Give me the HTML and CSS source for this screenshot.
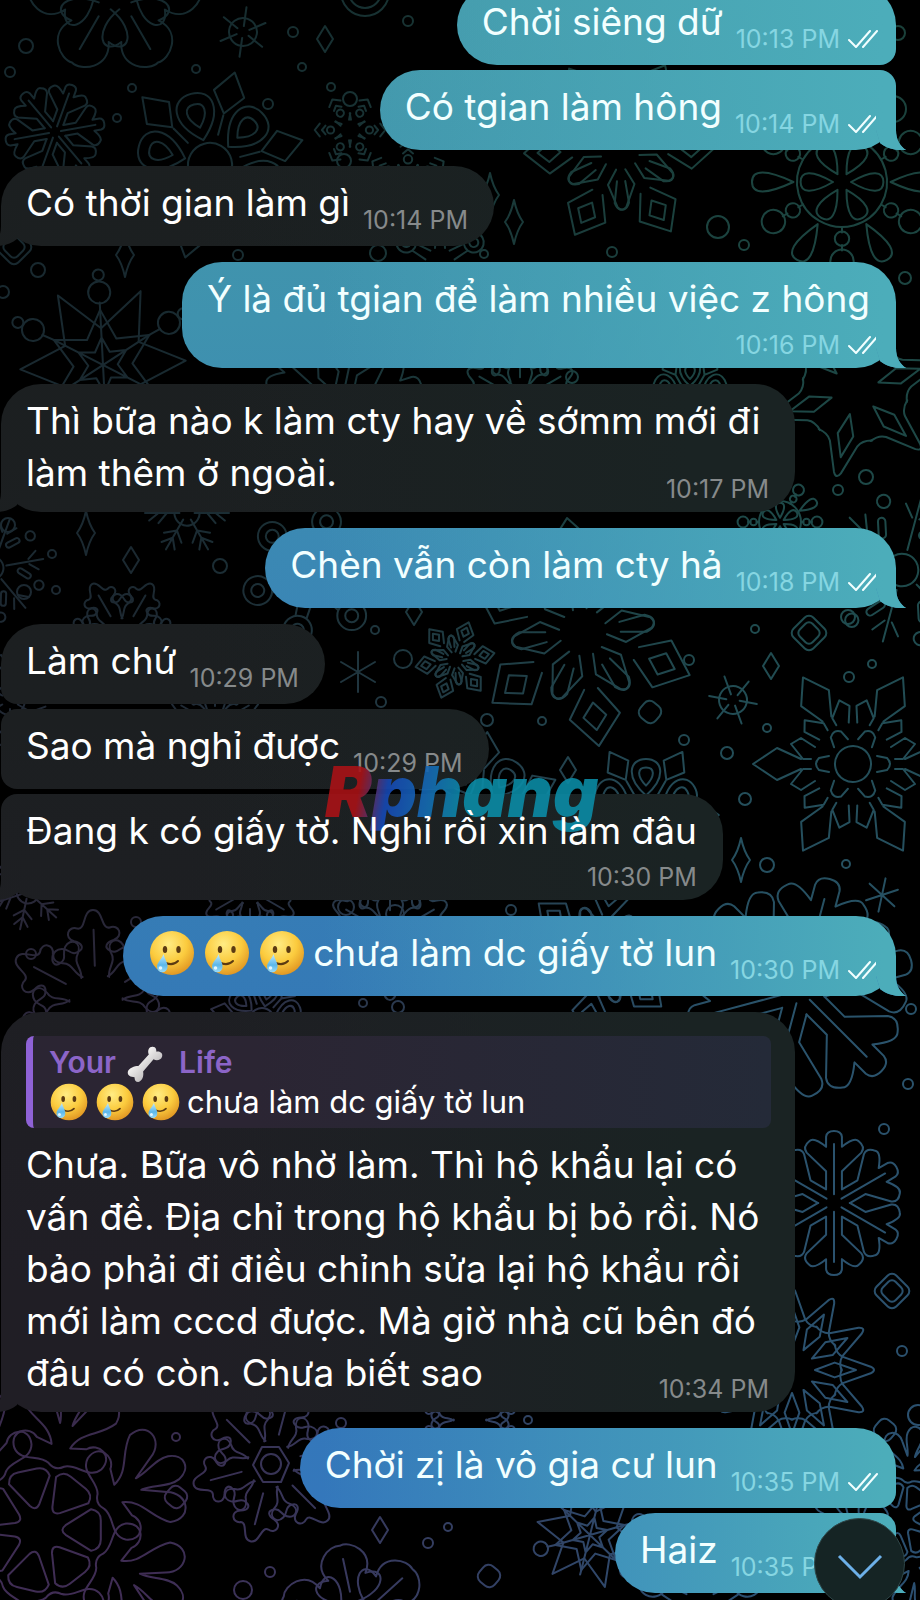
FILE: index.html
```html
<!DOCTYPE html>
<html lang="vi">
<head>
<meta charset="utf-8">
<meta name="viewport" content="width=device-width, initial-scale=1">
<title>Chat</title>
<link rel="stylesheet" href="styles.css">
</head>
<body>

<svg class="wallpaper" viewBox="0 0 920 1600" preserveAspectRatio="xMidYMin slice" aria-hidden="true">
  <defs>
    <linearGradient id="tint-left" x1="0" y1="0" x2="0" y2="1">
      <stop offset="0" stop-color="#16292e"/>
      <stop offset=".35" stop-color="#1b2931"/>
      <stop offset=".6" stop-color="#2a2739"/>
      <stop offset="1" stop-color="#402d55"/>
    </linearGradient>
    <linearGradient id="tint-right" x1="0" y1="0" x2="0" y2="1">
      <stop offset="0" stop-color="#1a4039"/>
      <stop offset=".35" stop-color="#1e4a4a"/>
      <stop offset=".65" stop-color="#2a536c"/>
      <stop offset="1" stop-color="#2b4f70"/>
    </linearGradient>
    <linearGradient id="fade" x1="0" y1="0" x2="1" y2="0">
      <stop offset=".15" stop-color="#000"/>
      <stop offset=".8" stop-color="#fff"/>
    </linearGradient>
    <mask id="fade-mask"><rect width="920" height="1600" fill="url(#fade)"/></mask>

    <!-- arms point up, 100 units long -->
    <g id="arm-leaf">
      <path d="M-8 -24C-48 -30 -54 -62 -25 -58C-42 -84 -14 -104 0 -100C14 -104 42 -84 25 -58C54 -62 48 -30 8 -24M0 -38V-82"/>
    </g>
    <g id="arm-lobe">
      <path d="M-14 -26C-24 -30 -24 -42 -36 -42C-50 -44 -48 -58 -36 -58C-28 -58 -26 -50 -18 -54C-10 -58 -14 -64 -22 -66C-34 -70 -28 -84 -18 -80C-8 -78 -12 -100 0 -100C12 -100 8 -78 18 -80C28 -84 34 -70 22 -66C14 -64 10 -58 18 -54C26 -50 28 -58 36 -58C48 -58 50 -44 36 -42C24 -42 24 -30 14 -26M0 -38V-78"/>
    </g>
    <g id="arm-branch">
      <path d="M-11 -19V-44L-38 -70Q-44 -78 -34 -86Q-28 -92 -11 -78V-92Q-10 -100 0 -100Q10 -100 11 -92V-78Q28 -92 34 -86Q44 -78 38 -70L11 -44V-19M0 -12V-82"/>
    </g>
    <g id="arm-diamond">
      <path d="M-6 -20V-38L-26 -54Q-36 -56 -34 -44L-20 -26M6 -20V-38L26 -54Q36 -56 34 -44L20 -26M-6 -50L-22 -74L0 -100L22 -74L6 -50M0 -86L10 -74L0 -62L-10 -74Z"/>
    </g>
    <g id="arm-spear">
      <path d="M-5 -42V-50L-20 -62L-26 -52L-17 -38M5 -42V-50L20 -62L26 -52L17 -38M-5 -52L-16 -76L0 -100L16 -76L5 -52M-8 -24L-6 -34Q0 -40 6 -34L8 -24"/>
    </g>
    <g id="arm-petal">
      <path d="M0 -10C-14 -34 -12 -46 0 -46C12 -46 14 -34 0 -10ZM0 -54C-14 -84 -14 -100 0 -100C14 -100 14 -84 0 -54Z"/>
    </g>
    <g id="arm-bead">
      <path d="M0 -50V-56M0 -70V-76"/>
      <circle cy="-63" r="8"/><circle cy="-88" r="13"/>
    </g>
    <g id="arm-splash">
      <path d="M-3 -16Q0 -12 3 -16L13 -32Q12 -38 6 -38H-6Q-12 -38 -13 -32Z" transform="rotate(25)"/>
      <path d="M-5 -42C-12 -46 -22 -38 -28 -46C-34 -56 -22 -62 -16 -56L-6 -54C-10 -66 -22 -66 -30 -76C-34 -90 -18 -94 -12 -82L-4 -68C-4 -76 -10 -84 -8 -92C-5 -102 5 -102 8 -92C10 -84 4 -76 4 -68L12 -82C18 -94 34 -90 30 -76C22 -66 10 -66 6 -54L16 -56C22 -62 34 -56 28 -46C22 -38 12 -46 5 -42Q0 -38 -5 -42"/>
    </g>
    <g id="arm-burst">
      <path d="M0 -28V-100M-5 -72L-18 -88M5 -72L18 -88"/>
      <rect x="-29" y="-72" width="10" height="28" rx="5" transform="rotate(-18)"/>
      <circle cx="0" cy="-96" r="9" transform="rotate(30)"/>
    </g>
    <g id="arm-twig">
      <path d="M0 -18V-100M0 -48L-24 -68M0 -48L24 -68M0 -68L-18 -90M0 -68L18 -90"/>
    </g>
    <g id="arm-loop">
      <path d="M0 -28C-30 -54 -24 -80 0 -80C24 -80 30 -54 0 -28ZM0 -42C-14 -56 -12 -68 0 -68C12 -68 14 -56 0 -42Z"/>
      <path d="M0 -58L-17 -80L0 -104L17 -80Z" transform="rotate(30)"/>
      <path d="M0 -34V-56" transform="rotate(30)"/>
    </g>
    <g id="arm-dash">
      <path d="M-18 -84L0 -98L18 -84M-12 -68L0 -78L12 -68M-24 -40L-12 -26M24 -40L12 -26"/>
      <circle cy="-54" r="10"/>
    </g>
    <g id="arm-ring">
      <path d="M-10 -28L-8 -58M10 -28L8 -58"/>
      <circle cy="-78" r="20"/><circle cy="-78" r="9"/>
    </g>

    <g id="leaf"><use href="#arm-leaf"/><use href="#arm-leaf" transform="rotate(60)"/><use href="#arm-leaf" transform="rotate(120)"/><use href="#arm-leaf" transform="rotate(180)"/><use href="#arm-leaf" transform="rotate(240)"/><use href="#arm-leaf" transform="rotate(300)"/></g>
    <g id="lobe"><use href="#arm-lobe"/><use href="#arm-lobe" transform="rotate(60)"/><use href="#arm-lobe" transform="rotate(120)"/><use href="#arm-lobe" transform="rotate(180)"/><use href="#arm-lobe" transform="rotate(240)"/><use href="#arm-lobe" transform="rotate(300)"/></g>
    <g id="branch"><use href="#arm-branch"/><use href="#arm-branch" transform="rotate(60)"/><use href="#arm-branch" transform="rotate(120)"/><use href="#arm-branch" transform="rotate(180)"/><use href="#arm-branch" transform="rotate(240)"/><use href="#arm-branch" transform="rotate(300)"/></g>
    <g id="diamond"><use href="#arm-diamond"/><use href="#arm-diamond" transform="rotate(60)"/><use href="#arm-diamond" transform="rotate(120)"/><use href="#arm-diamond" transform="rotate(180)"/><use href="#arm-diamond" transform="rotate(240)"/><use href="#arm-diamond" transform="rotate(300)"/></g>
    <g id="spear"><circle r="18"/><use href="#arm-spear"/><use href="#arm-spear" transform="rotate(60)"/><use href="#arm-spear" transform="rotate(120)"/><use href="#arm-spear" transform="rotate(180)"/><use href="#arm-spear" transform="rotate(240)"/><use href="#arm-spear" transform="rotate(300)"/></g>
    <g id="petal"><circle r="50"/><use href="#arm-petal"/><use href="#arm-petal" transform="rotate(60)"/><use href="#arm-petal" transform="rotate(120)"/><use href="#arm-petal" transform="rotate(180)"/><use href="#arm-petal" transform="rotate(240)"/><use href="#arm-petal" transform="rotate(300)"/><g transform="rotate(30)"><use href="#arm-bead"/><use href="#arm-bead" transform="rotate(60)"/><use href="#arm-bead" transform="rotate(120)"/><use href="#arm-bead" transform="rotate(180)"/><use href="#arm-bead" transform="rotate(240)"/><use href="#arm-bead" transform="rotate(300)"/></g></g>
    <g id="splash"><use href="#arm-splash"/><use href="#arm-splash" transform="rotate(51)"/><use href="#arm-splash" transform="rotate(103)"/><use href="#arm-splash" transform="rotate(154)"/><use href="#arm-splash" transform="rotate(206)"/><use href="#arm-splash" transform="rotate(257)"/><use href="#arm-splash" transform="rotate(309)"/></g>
    <g id="burst"><circle r="22"/><use href="#arm-burst"/><use href="#arm-burst" transform="rotate(60)"/><use href="#arm-burst" transform="rotate(120)"/><use href="#arm-burst" transform="rotate(180)"/><use href="#arm-burst" transform="rotate(240)"/><use href="#arm-burst" transform="rotate(300)"/></g>
    <g id="twig"><circle r="30"/><use href="#arm-twig"/><use href="#arm-twig" transform="rotate(60)"/><use href="#arm-twig" transform="rotate(120)"/><use href="#arm-twig" transform="rotate(180)"/><use href="#arm-twig" transform="rotate(240)"/><use href="#arm-twig" transform="rotate(300)"/></g>
    <g id="loop"><circle r="24"/><use href="#arm-loop"/><use href="#arm-loop" transform="rotate(60)"/><use href="#arm-loop" transform="rotate(120)"/><use href="#arm-loop" transform="rotate(180)"/><use href="#arm-loop" transform="rotate(240)"/><use href="#arm-loop" transform="rotate(300)"/></g>
    <g id="dash"><use href="#arm-dash"/><use href="#arm-dash" transform="rotate(60)"/><use href="#arm-dash" transform="rotate(120)"/><use href="#arm-dash" transform="rotate(180)"/><use href="#arm-dash" transform="rotate(240)"/><use href="#arm-dash" transform="rotate(300)"/></g>
    <g id="ring"><use href="#arm-ring"/><use href="#arm-ring" transform="rotate(60)"/><use href="#arm-ring" transform="rotate(120)"/><use href="#arm-ring" transform="rotate(180)"/><use href="#arm-ring" transform="rotate(240)"/><use href="#arm-ring" transform="rotate(300)"/></g>
    <g id="star">
      <path d="M0 -60L16 -28L52 -30L32 0L52 30L16 28L0 60L-16 28L-52 30L-32 0L-52 -30L-16 -28Z"/>
      <path d="M0 -30L8 -14L26 -15L16 0L26 15L8 14L0 30L-8 14L-26 15L-16 0L-26 -15L-8 -14ZM0 -60V60M-52 -30L52 30M-52 30L52 -30"/>
      <path d="M0 -40L45 -78L40 -23L90 0L40 23L45 78L0 40L-45 78L-40 23L-90 0L-40 -23L-45 -78Z"/>
      <path d="M0 -60V-68M52 -30L64 -36M52 30L64 36M0 60V68M-52 30L-64 36M-52 -30L-64 -36"/>
      <circle cy="-79" r="12"/><circle cx="74" cy="-42" r="12"/><circle cx="74" cy="42" r="12"/><circle cx="-74" cy="42" r="12"/><circle cx="-74" cy="-42" r="12"/>
      <circle cy="-98" r="6"/><circle cx="90" cy="-51" r="6"/><circle cx="-90" cy="-51" r="6"/>
    </g>
    <g id="arm-ray"><path d="M-31 -52Q-20 -54 -16 -62L-4 -96Q0 -104 4 -96L16 -62Q20 -54 31 -52M0 -28L-9 -52L0 -78L9 -52Z"/></g>
    <g id="rays"><use href="#arm-ray"/><use href="#arm-ray" transform="rotate(60)"/><use href="#arm-ray" transform="rotate(120)"/><use href="#arm-ray" transform="rotate(180)"/><use href="#arm-ray" transform="rotate(240)"/><use href="#arm-ray" transform="rotate(300)"/></g>
    <g id="wheel"><circle r="14"/><path d="M0 -6V-25M0 6V25M6 -3L21 -12M-6 3L-21 12M6 3L21 12M-6 -3L-21 -12"/></g>
    <path id="spark" d="M0 -20V20M-17 -10L17 10M-17 10L17 -10"/>
    <path id="gem" d="M0 -13L8 0L0 13L-8 0Z"/>
    <path id="tall-gem" d="M0 -22Q3 -8 9 0Q3 8 0 22Q-3 8 -9 0Q-3 -8 0 -22Z"/>
    <g id="tile"><rect x="-14" y="-14" width="28" height="28" rx="6" transform="rotate(45)"/><rect x="-9" y="-9" width="18" height="18" rx="5" transform="rotate(45)"/></g>
    <rect id="pebble" x="-10" y="-10" width="20" height="20" rx="7" transform="rotate(40)"/>

    <mask id="flakes" maskUnits="userSpaceOnUse" x="0" y="0" width="920" height="1600">
      <g class="flake-lines">
        <use href="#leaf" transform="translate(115 -12) rotate(30) scale(.86)"/>
        <use href="#wheel" transform="translate(243 32) rotate(8)"/>
        <use href="#branch" transform="translate(55 132) rotate(20) scale(.5)"/>
        <use href="#loop" transform="translate(210 165) rotate(-15) scale(.92)"/>
        <use href="#dash" transform="translate(350 130) rotate(30) scale(.36)"/>
        <use href="#dash" transform="translate(408 182) scale(.42)"/>
        <use href="#star" transform="translate(103 365) rotate(-3) scale(.92)"/>
        <use href="#diamond" transform="translate(620 150) rotate(28) scale(.96)"/>
        <use href="#petal" transform="translate(842 182) rotate(30) scale(.9)"/>
        <use href="#ring" transform="translate(440 262) scale(.5)"/>
        <use href="#branch" transform="translate(340 410) rotate(12) scale(.85)"/>
        <use href="#lobe" transform="translate(520 400) scale(.6)"/>
        <use href="#loop" transform="translate(690 400) scale(.5)"/>
        <use href="#rays" transform="translate(855 390) rotate(12) scale(.88)"/>
        <use href="#petal" transform="translate(780 522) scale(.42)"/>
        <use href="#burst" transform="translate(902 570) rotate(15) scale(.74)"/>
        <use href="#twig" transform="translate(187 513) rotate(30) scale(.42)"/>
        <use href="#burst" transform="translate(-8 568) rotate(20) scale(.52)"/>
        <use href="#lobe" transform="translate(122 636) rotate(30) scale(.6)"/>
        <use href="#ring" transform="translate(312 576) rotate(15) scale(.72)"/>
        <use href="#diamond" transform="translate(583 632) rotate(-8) scale(1.15)"/>
        <use href="#diamond" transform="translate(455 660) rotate(20) scale(.4)"/>
        <use href="#spark" transform="translate(358 672)"/>
        <use href="#wheel" transform="translate(733 700) rotate(-20)"/>
        <use href="#spear" transform="translate(853 764) rotate(30)"/>
        <use href="#lobe" transform="translate(215 725) scale(.5)"/>
        <use href="#twig" transform="translate(10 700) scale(.5)"/>
        <use href="#loop" transform="translate(646 815) scale(.7)"/>
        <use href="#loop" transform="translate(480 815) rotate(35) scale(.8)"/>
        <use href="#spark" transform="translate(882 895) rotate(12) scale(.85)"/>
        <use href="#branch" transform="translate(800 990) rotate(15) scale(1.15)"/>
        <use href="#lobe" transform="translate(96 1000) rotate(-2) scale(.9)"/>
        <use href="#lobe" transform="translate(250 890) scale(.5)"/>
        <use href="#twig" transform="translate(28 892) rotate(12) scale(.38)"/>
        <use href="#loop" transform="translate(262 1020) rotate(12) scale(.5)"/>
        <use href="#diamond" transform="translate(600 955) rotate(10) scale(.8)"/>
        <use href="#lobe" transform="translate(390 935) scale(.65)"/>
        <use href="#branch" transform="translate(834 1203) scale(.72)"/>
        <use href="#rays" transform="translate(792 1370) rotate(30) scale(.82)"/>
        <use href="#rays" transform="translate(792 1370) scale(.82)"/>
        <use href="#splash" transform="translate(40 1530) rotate(14) scale(1.6)"/>
        <use href="#lobe" transform="translate(271 1464) rotate(15) scale(.8)"/>
        <path d="M262 1447L279 1447L289 1463L281 1482L263 1482L253 1465Z"/>
        <circle cx="271" cy="1464" r="10"/>
        <use href="#leaf" transform="translate(356 1620) rotate(-12) scale(.76)"/>
        <use href="#lobe" transform="translate(470 1420) scale(.55)"/>
        <use href="#star" transform="translate(590 1535) rotate(14) scale(.6)"/>
        <use href="#splash" transform="translate(900 1520) rotate(10) scale(.95)"/>
        <use href="#ring" transform="translate(700 1610) scale(.7)"/>

        <use href="#tile" transform="translate(809 633)"/>
        <use href="#tile" transform="translate(892 1291)"/>
        <use href="#tile" transform="translate(14 247)"/>
        <use href="#pebble" transform="translate(650 712)"/>
        <use href="#pebble" transform="translate(176 1497)"/>
        <use href="#pebble" transform="translate(489 1576)"/>
        <use href="#pebble" transform="translate(885 1430)"/>
        <use href="#gem" transform="translate(325 39)"/>
        <use href="#gem" transform="translate(131 560)"/>
        <use href="#gem" transform="translate(771 666)"/>
        <use href="#gem" transform="translate(568 770)"/>
        <use href="#gem" transform="translate(414 612)"/>
        <use href="#gem" transform="translate(380 1530)"/>
        <use href="#tall-gem" transform="translate(514 222)"/>
        <use href="#tall-gem" transform="translate(490 195)"/>
        <use href="#tall-gem" transform="translate(125 255)"/>
        <use href="#tall-gem" transform="translate(86 533)"/>
        <use href="#tall-gem" transform="translate(741 860)"/>

        <circle cx="26" cy="46" r="7"/><circle cx="10" cy="72" r="5"/><circle cx="365" cy="-8" r="24"/><circle cx="365" cy="-8" r="16"/>
        <circle cx="293" cy="32" r="5"/><circle cx="302" cy="67" r="4"/><circle cx="408" cy="21" r="5"/><circle cx="196" cy="69" r="4"/>
        <circle cx="132" cy="88" r="4"/><circle cx="117" cy="118" r="4"/><circle cx="268" cy="104" r="5"/><circle cx="331" cy="87" r="4"/>
        <circle cx="350" cy="99" r="7"/><circle cx="344" cy="161" r="7"/><circle cx="898" cy="33" r="7"/><circle cx="893" cy="109" r="13"/>
        <circle cx="38" cy="270" r="7"/><circle cx="3" cy="292" r="6"/><circle cx="238" cy="255" r="5"/><circle cx="378" cy="253" r="8"/>
        <circle cx="484" cy="254" r="4"/><circle cx="612" cy="252" r="5"/><circle cx="718" cy="227" r="11"/><circle cx="744" cy="245" r="5"/>
        <circle cx="905" cy="278" r="6"/><circle cx="572" cy="377" r="6"/><circle cx="866" cy="477" r="7"/><circle cx="838" cy="490" r="5"/>
        <circle cx="8" cy="525" r="7"/><circle cx="52" cy="554" r="4"/><circle cx="24" cy="592" r="7"/><circle cx="56" cy="590" r="4"/>
        <circle cx="220" cy="566" r="7"/><circle cx="375" cy="630" r="4"/><circle cx="403" cy="659" r="9"/><circle cx="381" cy="702" r="5"/>
        <circle cx="487" cy="720" r="6"/><circle cx="542" cy="721" r="4"/><circle cx="689" cy="660" r="5"/><circle cx="755" cy="629" r="4"/>
        <circle cx="767" cy="728" r="4"/><circle cx="684" cy="740" r="5"/><circle cx="727" cy="753" r="6"/><circle cx="848" cy="617" r="7"/>
        <circle cx="849" cy="677" r="5"/><circle cx="872" cy="664" r="4"/><circle cx="745" cy="799" r="6"/><circle cx="767" cy="865" r="7"/>
        <circle cx="846" cy="864" r="4"/><circle cx="511" cy="910" r="5"/><circle cx="346" cy="907" r="8"/><circle cx="395" cy="914" r="9"/>
        <circle cx="136" cy="922" r="5"/><circle cx="31" cy="954" r="5"/><circle cx="363" cy="1003" r="4"/><circle cx="398" cy="1007" r="6"/>
        <circle cx="911" cy="1009" r="5"/><circle cx="908" cy="1084" r="5"/><circle cx="884" cy="1129" r="5"/><circle cx="902" cy="1351" r="5"/>
        <circle cx="176" cy="1437" r="4"/><circle cx="341" cy="1423" r="5"/><circle cx="528" cy="1420" r="4"/><circle cx="428" cy="1543" r="5"/>
        <circle cx="448" cy="1527" r="4"/><circle cx="270" cy="1572" r="5"/><circle cx="243" cy="1590" r="9"/><circle cx="918" cy="1415" r="10"/>
      </g>
    </mask>
  </defs>
  <g mask="url(#flakes)">
    <rect width="920" height="1600" fill="url(#tint-left)"/>
    <rect width="920" height="1600" fill="url(#tint-right)" mask="url(#fade-mask)"/>
  </g>
</svg>

<!-- shared icons -->
<svg class="sprite" aria-hidden="true">
  <defs>
    <radialGradient id="face-fill" cx=".42" cy=".3" r=".75">
      <stop offset="0" stop-color="#ffec84"/>
      <stop offset=".55" stop-color="#fbcb3e"/>
      <stop offset="1" stop-color="#dd9020"/>
    </radialGradient>
    <linearGradient id="tear-fill" x1="0" y1="0" x2="0" y2="1">
      <stop offset="0" stop-color="#c3ecff"/>
      <stop offset=".6" stop-color="#5cb7ea"/>
      <stop offset="1" stop-color="#9adcf8"/>
    </linearGradient>
    <linearGradient id="bone-fill" x1="0" y1="0" x2="1" y2="1">
      <stop offset=".3" stop-color="#f7f6f5"/>
      <stop offset=".75" stop-color="#b9b6b8"/>
    </linearGradient>
  </defs>
  <symbol id="tear-face" viewBox="0 0 48 48">
    <circle cx="24" cy="24" r="22" fill="url(#face-fill)"/>
    <ellipse cx="17" cy="20.500" rx="2.200" ry="3.600" fill="#5b3a12"/>
    <ellipse cx="30.500" cy="20.500" rx="2.200" ry="3.600" fill="#5b3a12"/>
    <path d="M18 34Q25 37 30 32" fill="none" stroke="#5b3a12" stroke-width="2" stroke-linecap="round"/>
    <path d="M15.500 25C17 31 20 34 19.500 38A5.200 5.200 0 0 1 9 38C9 33 14 30 15.500 25Z" fill="url(#tear-fill)"/>
    <circle cx="12.500" cy="39" r="1.800" fill="#e4f7ff"/>
  </symbol>
  <symbol id="bone" viewBox="0 0 40 40">
    <path d="M13 22L24 10C22 5 25 1 29 2C31 2 32 4 32 7C36 6 39 9 38 12C37 16 32 17 29 15L18 28C19 33 17 38 13 39C10 39 9 37 9 34C5 34 1 32 2 28C3 24 9 22 13 22Z" fill="url(#bone-fill)"/>
  </symbol>
  <symbol id="ticks" viewBox="0 0 30 18">
    <path d="M1 10L8 17L22 1M15 17L29 1" fill="none" stroke="#f2ffff" stroke-width="2" stroke-linecap="round" stroke-linejoin="round"/>
  </symbol>
</svg>

<main class="chat">
  <div class="message out">
    <p class="text">Chời siêng dữ</p>
    <div class="meta"><time>10:13 PM</time><svg class="ticks"><use href="#ticks"/></svg></div>
  </div>
  <div class="message out joined tail">
    <p class="text">Có tgian làm hông</p>
    <div class="meta"><time>10:14 PM</time><svg class="ticks"><use href="#ticks"/></svg></div>
  </div>

  <div class="message in tail">
    <p class="text">Có thời gian làm gì</p>
    <div class="meta"><time>10:14 PM</time></div>
  </div>

  <div class="message out stacked tail">
    <p class="text">Ý là đủ tgian để làm nhiều việc z hông</p>
    <div class="meta"><time>10:16 PM</time><svg class="ticks"><use href="#ticks"/></svg></div>
  </div>

  <div class="message in long tail">
    <p class="text">Thì bữa nào k làm cty hay về sớmm mới đi làm thêm ở ngoài.</p>
    <div class="meta"><time>10:17 PM</time></div>
  </div>

  <div class="message out tail">
    <p class="text">Chèn vẫn còn làm cty hả</p>
    <div class="meta"><time>10:18 PM</time><svg class="ticks"><use href="#ticks"/></svg></div>
  </div>

  <div class="message in">
    <p class="text">Làm chứ</p>
    <div class="meta"><time>10:29 PM</time></div>
  </div>
  <div class="message in joined">
    <p class="text">Sao mà nghỉ được</p>
    <div class="meta"><time>10:29 PM</time></div>
  </div>
  <div class="message in joined stacked tail">
    <span class="watermark">Rphang</span>
    <p class="text">Đang k có giấy tờ. Nghỉ rồi xin làm đâu</p>
    <div class="meta"><time>10:30 PM</time></div>
  </div>

  <div class="message out tail">
    <p class="text"><svg class="emoji"><use href="#tear-face"/></svg><svg class="emoji"><use href="#tear-face"/></svg><svg class="emoji"><use href="#tear-face"/></svg>chưa làm dc giấy tờ lun</p>
    <div class="meta"><time>10:30 PM</time><svg class="ticks"><use href="#ticks"/></svg></div>
  </div>

  <div class="message in long tail">
    <blockquote class="reply">
      <p class="reply-name">Your <svg class="bone"><use href="#bone"/></svg> Life</p>
      <p class="reply-text"><svg class="emoji"><use href="#tear-face"/></svg><svg class="emoji"><use href="#tear-face"/></svg><svg class="emoji"><use href="#tear-face"/></svg>chưa làm dc giấy tờ lun</p>
    </blockquote>
    <p class="text">Chưa. Bữa vô nhờ làm. Thì hộ khẩu lại có vấn đề. Địa chỉ trong hộ khẩu bị bỏ rồi. Nó bảo phải đi điều chỉnh sửa lại hộ khẩu rồi mới làm cccd được. Mà giờ nhà cũ bên đó đâu có còn. Chưa biết sao</p>
    <div class="meta"><time>10:34 PM</time></div>
  </div>

  <div class="message out">
    <p class="text">Chời zị là vô gia cư lun</p>
    <div class="meta"><time>10:35 PM</time><svg class="ticks"><use href="#ticks"/></svg></div>
  </div>
  <div class="message out joined tail">
    <p class="text">Haiz</p>
    <div class="meta"><time>10:35 PM</time><svg class="ticks"><use href="#ticks"/></svg></div>
  </div>

  <button class="scroll-down" type="button" aria-label="Cuộn xuống">
    <svg viewBox="0 0 46 26"><path d="M2 2L23 23L44 2"/></svg>
  </button>
</main>

</body>
</html>
```
FILE: styles.css
```css
* {
    box-sizing: border-box;
}

body {
    margin: 0;
    background: #000;
    color: #fff;
    font-family: Inter, "Liberation Sans", sans-serif;
}

p, blockquote {
    margin: 0;
}

.wallpaper {
    position: absolute;
    top: 0;
    left: 0;
    width: 100%;
    height: 100%;
}

.flake-lines {
    fill: none;
    stroke: #fff;
    stroke-width: 2px;
    stroke-linejoin: round;
    stroke-linecap: round;
}

.wallpaper path, .wallpaper circle, .wallpaper rect {
    vector-effect: non-scaling-stroke;
}

.sprite {
    position: absolute;
    width: 0;
    height: 0;
}

/* the list sticks to the bottom, older messages run off the top */
.chat {
    position: relative;
    display: flex;
    flex-direction: column;
    justify-content: flex-end;
    height: 100vh;
    padding: 0 24px 7px 1px;
    overflow: hidden;
}

.message {
    position: relative;
    display: flex;
    flex-shrink: 0;
    align-items: flex-end;
    gap: 13px;
    max-width: 89%;
    min-height: 80px;
    margin-top: 16px;
    padding: 11px 26px 13px 25px;
    border-radius: 40px;
    background-attachment: fixed;
}

.in {
    align-self: flex-start;
    background-image:
        linear-gradient(to right, transparent 20%, #1a2323 75%),
        linear-gradient(to bottom, #1b1f20 0%, #1c1f21 45%, #201e25 80%);
}

.out {
    align-self: flex-end;
    background-image:
        linear-gradient(to right, transparent 35%, #4cadba 96%),
        linear-gradient(to bottom, #4499ab 0%, #3f92ae 20%, #3a86b5 38%, #3478b6 65%, #3477bc 100%);
}

.joined {
    margin-top: 5px;
}

.in:not(.tail) {
    border-bottom-left-radius: 16px;
}

.in.joined {
    border-top-left-radius: 16px;
}

.out:not(.tail) {
    border-bottom-right-radius: 16px;
}

.out.joined {
    border-top-right-radius: 16px;
}

.tail::after {
    content: "";
    position: absolute;
    bottom: 0;
    width: 30px;
    height: 40px;
    background: inherit;
}

.out.tail::after {
    right: -10px;
    clip-path: path("M0 0H20V20C20 30 24 36 30 40C20 41 10 38 4 33L0 20Z");
}

.in.tail::after {
    left: -10px;
    clip-path: path("M30 0H10V20C10 30 6 36 0 40C10 41 20 38 26 33L30 20Z");
}

.text {
    position: relative;
    padding-bottom: 4px;
    font-size: 37px;
    line-height: 52px;
}

.in .text {
    color: #fff;
}

.out .text {
    color: #f2ffff;
}

.meta {
    display: flex;
    align-items: center;
    gap: 8px;
    font-size: 25px;
    line-height: 26px;
    white-space: nowrap;
}

.in .meta {
    color: #868a8b;
}

.out .meta {
    margin-right: -8px;
    color: #86d6e2;
}

.ticks {
    width: 30px;
    height: 18px;
}

.stacked,
.long {
    flex-direction: column;
    gap: 0;
    padding-bottom: 10px;
}

.stacked .text {
    padding-bottom: 7px;
}

.long {
    max-width: 794px;
}

.long .text {
    align-self: stretch;
    padding-bottom: 0;
}

.long .meta {
    margin-top: -23px;
}

.emoji {
    width: 48px;
    height: 48px;
    margin-right: 7px;
    vertical-align: -11px;
}

.text .emoji {
    margin-top: -12px;
    margin-bottom: -4px;
    vertical-align: -7px;
}

.reply {
    align-self: stretch;
    margin: 13px -2px 11px 0;
    padding: 6px 16px;
    border-left: 7px solid #8f62d6;
    border-radius: 8px;
    background: linear-gradient(to right, #2b2533 30%, #242a38);
    font-size: 31px;
    line-height: 40px;
}

.reply-name {
    color: #8c65c8;
    font-size: 30px;
    font-weight: 600;
}

.reply-text {
    white-space: nowrap;
}

.reply .emoji {
    width: 40px;
    height: 40px;
    margin: -4px 6px -4px 0;
    vertical-align: -5px;
}

.bone {
    width: 38px;
    height: 38px;
    margin: -6px 8px -6px 2px;
    vertical-align: -4px;
}

.watermark {
    position: absolute;
    top: -42px;
    left: 324px;
    background: linear-gradient(100deg, #a81216 14%, #1648b4 24%, #156ab4 38%, #0b8ba5 52%, #0b8ba5);
    -webkit-background-clip: text;
    background-clip: text;
    color: transparent;
    font-size: 70px;
    font-style: italic;
    font-weight: 900;
    line-height: 80px;
    opacity: .9;
}

.scroll-down {
    position: absolute;
    right: 15px;
    bottom: -9px;
    display: flex;
    align-items: center;
    justify-content: center;
    width: 91px;
    height: 91px;
    padding: 0;
    border: 1px solid #2e4648;
    border-radius: 50%;
    background: #152424;
}

.scroll-down svg {
    width: 46px;
    height: 26px;
    margin-top: 6px;
    fill: none;
    stroke: #6db0e8;
    stroke-width: 3px;
}
```
